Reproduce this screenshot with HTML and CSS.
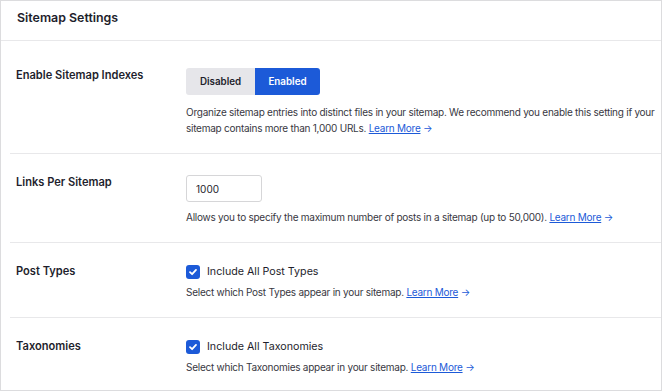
FILE: index.html
```html
<!DOCTYPE html>
<html lang="en">
<head>
    <meta charset="UTF-8">
    <meta name="viewport" content="width=device-width, initial-scale=1.0">
    <title>Sitemap Settings</title>

    <link rel="stylesheet" href="styles.css">
</head>
<body>
    <main class="settings-card">
        <header class="card-header">
            <h2 class="card-title">Sitemap Settings</h2>
        </header>
        <div class="card-body">
            <section class="setting-row first-row">
                <div class="setting-label">Enable Sitemap Indexes</div>
                <div class="setting-control">
                    <div class="toggle-group">
                        <button class="toggle-button">Disabled</button>
                        <button class="toggle-button active">Enabled</button>
                    </div>
                    <p class="setting-help">Organize sitemap entries into distinct files in your sitemap. We recommend you enable this setting if your sitemap contains more than 1,000 URLs. <a href="/" class="learn-link">Learn More</a> <span class="link-arrow">&rarr;</span></p>
                </div>
            </section>
            <section class="setting-row">
                <div class="setting-label">Links Per Sitemap</div>
                <div class="setting-control">
                    <input type="text" class="number-input" value="1000">
                    <p class="setting-help">Allows you to specify the maximum number of posts in a sitemap (up to 50,000). <a href="/" class="learn-link">Learn More</a> <span class="link-arrow">&rarr;</span></p>
                </div>
            </section>
            <section class="setting-row">
                <div class="setting-label">Post Types</div>
                <div class="setting-control">
                    <label class="check-line">
                        <span class="check-box">
                            <svg width="10" height="10" viewBox="0 0 10 10"><path d="M2 5.2 4.1 7.2 8 2.9" fill="none" stroke="#fff" stroke-width="1.8" stroke-linecap="round" stroke-linejoin="round"/></svg>
                        </span>
                        Include All Post Types
                    </label>
                    <p class="setting-help">Select which Post Types appear in your sitemap. <a href="/" class="learn-link">Learn More</a> <span class="link-arrow">&rarr;</span></p>
                </div>
            </section>
            <section class="setting-row">
                <div class="setting-label">Taxonomies</div>
                <div class="setting-control">
                    <label class="check-line">
                        <span class="check-box">
                            <svg width="10" height="10" viewBox="0 0 10 10"><path d="M2 5.2 4.1 7.2 8 2.9" fill="none" stroke="#fff" stroke-width="1.8" stroke-linecap="round" stroke-linejoin="round"/></svg>
                        </span>
                        Include All Taxonomies
                    </label>
                    <p class="setting-help">Select which Taxonomies appear in your sitemap. <a href="/" class="learn-link">Learn More</a> <span class="link-arrow">&rarr;</span></p>
                </div>
            </section>
        </div>
    </main>
</body>
</html>
```

FILE: styles.css
```css
:root {
    --primary-color: #1c5ad8;
    --text-color: #1e1e2c;
    --muted-color: #383842;
    --line-color: #e8e8ea;
    --border-color: #dcdcde;
}

body {
    margin: 0;
    background: #ffffff;
    font-family: Inter, "Noto Sans", sans-serif;
    color: var(--text-color);
}

.settings-card {
    width: 660px;
    height: 389px;
    border: 1px solid var(--border-color);
    background: #ffffff;
    overflow: hidden;
}

.card-header {
    height: 40px;
    box-sizing: border-box;
    display: flex;
    align-items: center;
    padding: 0 16px 6px;
    border-bottom: 1px solid var(--line-color);
}

.card-title {
    margin: 0;
    font-size: 12.4px;
    font-weight: 600;
}

.card-body {
    padding-left: 9px;
}

.setting-row {
    display: grid;
    grid-template-columns: 170px 1fr;
    padding: 21px 0 17px 6px;
    border-bottom: 1px solid var(--line-color);
}

.first-row {
    padding-top: 27px;
}

.setting-label {
    font-size: 11.1px;
    font-weight: 600;
    line-height: 14px;
}

.toggle-group {
    display: flex;
    margin-bottom: 9px;
}

.toggle-button {
    height: 27px;
    border: none;
    outline: none;
    font-family: inherit;
    font-size: 9.8px;
    font-weight: 600;
    cursor: pointer;
}

.toggle-button:first-child {
    width: 69px;
    background: #e6e6ea;
    color: var(--text-color);
    border-radius: 3px 0 0 3px;
}

.toggle-button.active {
    width: 65px;
    background: var(--primary-color);
    color: #ffffff;
    border-radius: 0 3px 3px 0;
}

.number-input {
    display: block;
    width: 76px;
    height: 27px;
    box-sizing: border-box;
    border: 1px solid #d6d6d8;
    border-radius: 3px;
    padding: 0 9px;
    margin-bottom: 7px;
    font-family: inherit;
    font-size: 10px;
    color: var(--text-color);
}

.check-line {
    display: flex;
    align-items: center;
    gap: 7px;
    height: 15px;
    margin-bottom: 5px;
    font-size: 10.7px;
}

.check-box {
    width: 14px;
    height: 14px;
    border-radius: 3px;
    background: var(--primary-color);
    display: flex;
    align-items: center;
    justify-content: center;
}

.setting-help {
    margin: 0;
    font-size: 10px;
    line-height: 16px;
    letter-spacing: -0.25px;
    color: var(--muted-color);
}

.learn-link {
    color: var(--primary-color);
    text-decoration: underline;
}

.link-arrow {
    color: var(--primary-color);
}
```
